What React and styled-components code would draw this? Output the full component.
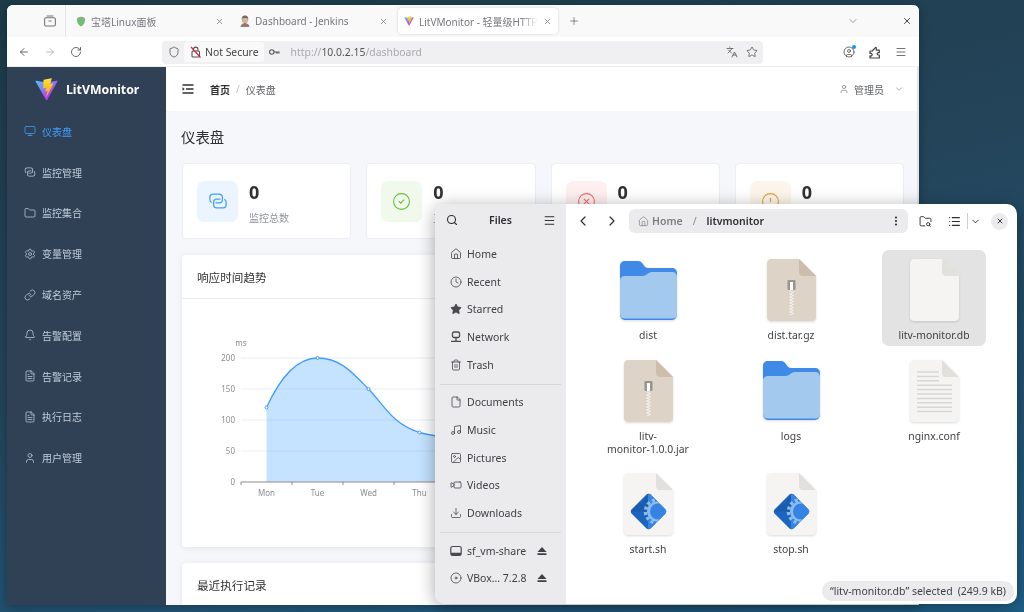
import React from "react";
import styled, { createGlobalStyle } from "styled-components";
import {
  ArrowLeft, ArrowRight, Bell, ChevronDown, ChevronLeft, ChevronRight, CircleAlert, CircleCheck, CircleX,
  Clock, Disc, Download, EllipsisVertical, File, FileText, Folder, FolderSearch, HardDrive, Home, Image,
  Languages, Link as LinkIcon, List, Menu, Monitor, Music, Plus, RotateCw, Search,
  Settings, Shield, Star, Trash2, User, Video, X, CircleUser,
} from "lucide-react";

const GlobalStyle = createGlobalStyle`
  html, body { margin: 0; padding: 0; width: 1024px; height: 612px; overflow: hidden; }
  body { font-family: "Noto Sans", "Noto Sans CJK SC", sans-serif; }
  * { box-sizing: border-box; }
`;

const Desktop = styled.div`
  position: relative;
  width: 1024px;
  height: 612px;
  overflow: hidden;
  background: linear-gradient(165deg, #1d3a48 0%, #24445a 45%, #1f6088 100%);
  filter: blur(0.3px);
`;

/* browser window */
const BrowserWindow = styled.div`
  position: absolute;
  left: 7px;
  top: 5px;
  width: 912px;
  height: 600px;
  display: flex;
  flex-direction: column;
  overflow: hidden;
  background: #fff;
  border-radius: 6px 6px 0 0;
  box-shadow: 0 2px 10px rgba(0, 0, 0, 0.3);
`;

const TabBar = styled.div`
  height: 32px;
  flex: none;
  display: flex;
  align-items: center;
  background: #f9f9fa;
  color: #5b5b66;
`;

const TabsButton = styled.div`
  width: 59px;
  height: 100%;
  display: flex;
  align-items: center;
  justify-content: flex-end;
  padding-right: 9px;
  margin-right: 4px;
  border-right: 1px solid #e4e4e6;
  color: #777;
`;

const Tabs = styled.div`
  display: flex;
  gap: 4px;
  height: 26px;
`;

const Tab = styled.div`
  width: 160px;
  height: 26px;
  display: flex;
  align-items: center;
  gap: 5px;
  padding: 0 6px;
  font-size: 10px;
  color: #77777f;
  border-radius: 4px;
  background: ${p => (p.$active ? "#fff" : "transparent")};
  box-shadow: ${p => (p.$active ? "0 0 3px rgba(0,0,0,.16)" : "none")};
`;

const TabTitle = styled.span`
  flex: 1;
  white-space: nowrap;
  overflow: hidden;
  ${p => p.$fade && "mask-image: linear-gradient(to right, #000 85%, transparent);"}
`;

const TabBarEnd = styled.div`
  flex: 1;
  display: flex;
  align-items: center;
  padding: 0 7px 0 10px;
  justify-content: space-between;
`;

const WindowButtons = styled.div`
  display: flex;
  align-items: center;
  gap: 43px;
`;

const Toolbar = styled.div`
  height: 29px;
  flex: none;
  display: flex;
  align-items: center;
  padding: 1px 0 0 11px;
  background: #fff;
  color: #444;
`;

const NavButtons = styled.div`
  width: 144px;
  display: flex;
  gap: 14px;
  flex: none;
`;

const UrlBar = styled.div`
  width: 601px;
  height: 23px;
  flex: none;
  display: flex;
  align-items: center;
  padding: 0 4px 0 6px;
  background: #f0f0f2;
  border-radius: 4px;
  font-size: 10.4px;
`;

const NotSecure = styled.div`
  display: flex;
  align-items: center;
  gap: 4px;
  height: 20px;
  padding: 0 5px 0 6px;
  margin: 0 5px 0 4px;
  border-radius: 3px;
  background: #f9f9fa;
  color: #444;
`;

const UrlText = styled.span`
  flex: 1;
  margin-left: 11px;
  color: #a8a8ae;
  b { font-weight: 400; color: #555; }
`;

const UrlActions = styled.div`
  display: flex;
  gap: 8px;
  color: #444;
  padding-right: 1px;
`;

const ToolbarEnd = styled.div`
  display: flex;
  gap: 14px;
  margin-left: 80px;
`;

const ProfileBadge = styled.span`
  position: relative;
  display: flex;
  &::after {
    content: "";
    position: absolute;
    right: -1px;
    top: -1px;
    width: 4px;
    height: 4px;
    border-radius: 50%;
    background: #0a9cf0;
  }
`;

const Strip = styled.div`
  height: 1px;
  flex: none;
  background: #eeeef0;
`;

const PageBody = styled.div`
  flex: 1;
  min-height: 0;
  display: flex;
`;

const Sidebar = styled.aside`
  width: 159px;
  flex: none;
  background: #304156;
`;

const Brand = styled.div`
  height: 44px;
  display: flex;
  align-items: center;
  gap: 8px;
  padding-left: 28px;
  color: #fff;
  font-size: 12.3px;
  font-weight: 700;
`;

const NavItem = styled.div`
  height: 40.8px;
  display: flex;
  align-items: center;
  gap: 6px;
  padding-left: 17px;
  font-size: 10px;
  color: ${p => (p.$active ? "#409eff" : "#bfcbd9")};
`;

const Main = styled.main`
  flex: 1;
  min-width: 0;
  display: flex;
  flex-direction: column;
  background: #f5f7fa;
  border-right: 2px solid #e3e4e6;
`;

const PageHeader = styled.header`
  height: 44px;
  flex: none;
  display: flex;
  align-items: center;
  padding: 0 13px 0 16px;
  background: #fff;
  font-size: 10px;
  color: #303133;
`;

const Crumbs = styled.div`
  flex: 1;
  display: flex;
  align-items: center;
  margin-left: 16px;
  b { font-weight: 700; }
  i { font-style: normal; margin: 0 6px; color: #c0c4cc; }
  span { color: #606266; }
`;

const UserMenu = styled.div`
  display: flex;
  align-items: center;
  gap: 5px;
  color: #606266;
`;

const Content = styled.div`
  padding: 17px 13px 0 16px;
  overflow: hidden;
  flex: 1;
`;

const PageTitle = styled.h1`
  margin: 0 0 15px -1px;
  font-size: 14.4px;
  line-height: 20px;
  font-weight: 400;
  color: #303133;
`;

const StatGrid = styled.div`
  display: grid;
  grid-template-columns: repeat(4, 1fr);
  gap: 15px;
`;

const StatCard = styled.div`
  height: 76px;
  display: flex;
  align-items: center;
  gap: 11px;
  padding: 0 14px;
  background: #fff;
  border: 1px solid #ebeef5;
  border-radius: 4px;
`;

const StatIcon = styled.div`
  width: 41px;
  height: 41px;
  border-radius: 7px;
  display: flex;
  align-items: center;
  justify-content: center;
  background: ${p => p.$bg};
  color: ${p => p.$fg};
`;

const StatValue = styled.div`
  padding-top: 2px;
  font-size: 18px;
  line-height: 24px;
  font-weight: 700;
  color: #303133;
`;

const StatLabel = styled.div`
  margin-top: 7px;
  font-size: 10px;
  line-height: 14px;
  min-height: 14px;
  color: #909399;
`;

const Panel = styled.section`
  margin-top: 16px;
  background: #fff;
  border-radius: 4px;
  box-shadow: 0 1px 6px rgba(0, 0, 0, 0.08);
`;

const PanelHead = styled.div`
  height: 44px;
  display: flex;
  align-items: center;
  padding: 0 15px;
  font-size: 11.6px;
  color: #303133;
  border-bottom: ${p => (p.$flat ? "none" : "1px solid #ebeef5")};
`;

const Chart = styled.svg`
  display: block;
  text {
    font-family: "Noto Sans", sans-serif;
    font-size: 8px;
    fill: #8a8d93;
  }
`;

/* files window */
const FilesWindow = styled.div`
  position: absolute;
  left: 435px;
  top: 204px;
  width: 582px;
  height: 400px;
  display: flex;
  overflow: hidden;
  border-radius: 10px;
  background: #fff;
  box-shadow: 0 3px 18px rgba(0, 0, 0, 0.35);
`;

const FilesSide = styled.div`
  width: 131px;
  flex: none;
  padding: 0 4px;
  background: #ebebed;
  color: #3f3f44;
  font-size: 10.5px;
`;

const FilesSideHead = styled.div`
  height: 32px;
  margin-bottom: 4px;
  display: flex;
  align-items: center;
  justify-content: space-between;
  padding: 0 6px 0 7px;
  color: #2e2e33;
  font-weight: 600;
`;

const Place = styled.div`
  height: 27.7px;
  display: flex;
  align-items: center;
  gap: 5px;
  padding: 0 15px 0 11px;
  svg:first-child { flex: none; }
`;

const PlaceName = styled.span`
  flex: 1;
  white-space: nowrap;
`;

const PlaceRule = styled.div`
  height: 1px;
  margin: 5.5px 1px 3.5px;
  background: #d6d6d9;
`;

const FilesMain = styled.div`
  flex: 1;
  min-width: 0;
  position: relative;
  color: #333;
`;

const FilesBar = styled.div`
  height: 34px;
  display: flex;
  align-items: center;
  padding: 0 0 0 9px;
  color: #2e2e33;
`;

const NavGroup = styled.div`
  display: flex;
  gap: 13px;
  margin-right: 9px;
`;

const PathBar = styled.div`
  width: 279px;
  height: 24px;
  display: flex;
  align-items: center;
  padding: 0 6px 0 9px;
  border-radius: 6px;
  background: #ebebed;
  font-size: 10.5px;
  font-weight: 600;
  color: #2e2e33;
`;

const PathHome = styled.span`
  display: flex;
  align-items: center;
  gap: 3px;
  color: #7e7e82;
`;

const PathSep = styled.span`
  margin: 0 10px;
  color: #8c8c90;
  font-weight: 400;
`;

const PathSpacer = styled.span`
  flex: 1;
`;

const BarTools = styled.div`
  display: flex;
  align-items: center;
  margin-left: 11px;
`;

const ViewRule = styled.span`
  width: 1px;
  height: 16px;
  margin: 0 2px 0 6px;
  background: #cfcfd2;
`;

const CloseButton = styled.span`
  width: 17px;
  height: 17px;
  margin-left: 10px;
  display: flex;
  align-items: center;
  justify-content: center;
  border-radius: 50%;
  background: #ebebed;
`;

const FileGrid = styled.div`
  display: grid;
  grid-template-columns: repeat(3, 104px);
  column-gap: 39px;
  row-gap: 4.5px;
  padding: 12px 0 0 30px;
  align-items: start;
`;

const FileCell = styled.div`
  display: flex;
  flex-direction: column;
  align-items: center;
  padding: 9px 4px 4px;
  border-radius: 7px;
  background: ${p => (p.$selected ? "#e3e3e3" : "transparent")};
`;

const FileIconBox = styled.div`
  height: 62px;
  display: flex;
  align-items: center;
  justify-content: center;
  margin-bottom: 8px;
  filter: drop-shadow(0 1px 1px rgba(0, 0, 0, 0.14));
`;

const FileName = styled.div`
  font-size: 10.4px;
  line-height: 13px;
  text-align: center;
  color: #3f3f44;
`;

const StatusPill = styled.div`
  position: absolute;
  right: 3px;
  bottom: 3px;
  height: 20px;
  padding: 0 8px;
  display: flex;
  align-items: center;
  gap: 5px;
  font-size: 10.5px;
  color: #3f3f44;
  background: #ebebed;
  border-radius: 10px 10px 8px 10px;
`;

const Logo = ({ size }) => (
  <svg width={size} height={size} viewBox="0 0 410 404" fill="none">
    <defs>
      <linearGradient id="vitePaint" x1="6" y1="33" x2="235" y2="344" gradientUnits="userSpaceOnUse">
        <stop stopColor="#41D1FF" />
        <stop offset="1" stopColor="#BD34FE" />
      </linearGradient>
      <linearGradient id="boltPaint" x1="194" y1="8" x2="236" y2="293" gradientUnits="userSpaceOnUse">
        <stop stopColor="#FFEA83" />
        <stop offset="0.08" stopColor="#FFDD35" />
        <stop offset="1" stopColor="#FFA800" />
      </linearGradient>
    </defs>
    <path d="M399.641 59.5246L215.643 388.545C211.844 395.338 202.084 395.378 198.228 388.618L10.5817 59.5563C6.38087 52.1896 12.6802 43.2665 21.0281 44.7586L205.223 77.6824C206.398 77.8924 207.601 77.8904 208.776 77.6763L389.119 44.8058C397.439 43.2894 403.768 52.1434 399.641 59.5246Z" fill="url(#vitePaint)" />
    <path d="M292.965 1.5744L156.801 28.2552C154.563 28.6937 152.906 30.5903 152.771 32.8664L144.395 174.33C144.198 177.662 147.258 180.248 150.51 179.498L188.42 170.749C191.967 169.931 195.172 173.055 194.443 176.622L183.18 231.775C182.422 235.487 185.907 238.661 189.532 237.56L212.947 230.446C216.577 229.344 220.065 232.527 219.297 236.242L201.398 322.875C200.278 328.294 207.486 331.249 210.492 326.603L212.5 323.5L323.454 102.072C325.312 98.3645 322.108 94.137 318.036 94.9228L279.014 102.454C275.347 103.161 272.227 99.746 273.262 96.1583L298.731 7.86689C299.767 4.27314 296.636 0.855181 292.965 1.5744Z" fill="url(#boltPaint)" />
  </svg>
);

const AcornIcon = () => (
  <svg width="10" height="11" viewBox="0 0 10 11">
    <path d="M1 3h8c.3 3.5-1.5 6.3-4 7.5C2.5 9.3.7 6.5 1 3z" fill="#6cbf73" />
    <path d="M.7 3.2C1.2 1.5 3 .8 5 .8s3.800.7 4.300 2.400z" fill="#8fae86" />
  </svg>
);

const JenkinsIcon = () => (
  <svg width="10" height="12" viewBox="0 0 10 12">
    <ellipse cx="5" cy="4.5" rx="3.3" ry="4" fill="#d9b497" />
    <path d="M1.700 4C1.800 1.500 3.500.5 5 .5S8.200 1.500 8.300 4C7 2.800 3 2.800 1.700 4z" fill="#6d6b6d" />
    <path d="M.6 12c0-2.600 1.800-3.800 4.400-3.800S9.400 9.400 9.400 12z" fill="#8a8078" />
    <path d="M4 8.300h2l-.5 3h-1z" fill="#c75b4f" />
  </svg>
);

const TabsIcon = () => (
  <svg width="12" height="12" viewBox="0 0 12 12" fill="none" stroke="currentColor" strokeWidth="1.1">
    <rect x="0.6" y="2.800" width="10.800" height="8.200" rx="1.500" />
    <path d="M2.500 1h7M4.500 6h3" />
  </svg>
);

const FoldIcon = () => (
  <svg width="12" height="12" viewBox="0 0 12 12" fill="none" stroke="#303133" strokeWidth="1.3">
    <path d="M.5 2h11M4 6h7.500M.5 10h11" />
    <path d="M.5 4.300L2.800 6 .5 7.700z" fill="#303133" stroke="none" />
  </svg>
);

const KeyIcon = () => (
  <svg width="11" height="8" viewBox="0 0 11 8" fill="none" stroke="#555" strokeWidth="1.1">
    <circle cx="2.800" cy="4" r="2.200" />
    <path d="M5 4h5.500M8 4v2M10 4v1.500" />
  </svg>
);

const InsecureLockIcon = () => (
  <svg width="11" height="12" viewBox="0 0 11 12" fill="none" stroke="#555" strokeWidth="1.1">
    <rect x="2" y="5" width="7.500" height="6" rx="1" />
    <path d="M3.500 5V3.300a2.200 2.200 0 0 1 4.400 0V5" />
    <path d="M1 1l9.500 10.500" stroke="#d7264b" strokeWidth="1.2" />
  </svg>
);

const ExtensionIcon = () => (
  <svg width="12" height="13" viewBox="0 0 12 13" fill="none" stroke="#444" strokeWidth="1.2" strokeLinejoin="round">
    <path d="M1 5h2.300l3-3.300c.4-.5 1-.3 1 .3v2.200h3v2.400H9.300a1.200 1.200 0 0 0 0 2.400h1V12H1V9.800a1.200 1.200 0 0 0 1.500-2.400H1z" />
  </svg>
);

const ConnectionIcon = ({ size }) => (
  <svg width={size} height={size} viewBox="0 0 1024 1024" fill="currentColor">
    <path d="M640 384v64H448a128 128 0 0 0-128 128v128a128 128 0 0 0 128 128h320a128 128 0 0 0 128-128V576a128 128 0 0 0-64-110.848V394.880c74.560 26.368 128 97.472 128 181.056v128a192 192 0 0 1-192 192H448a192 192 0 0 1-192-192V576a192 192 0 0 1 192-192z" />
    <path d="M384 640v-64h192a128 128 0 0 0 128-128V320a128 128 0 0 0-128-128H256a128 128 0 0 0-128 128v128a128 128 0 0 0 64 110.848v70.272A192.060 192.060 0 0 1 64 448V320a192 192 0 0 1 192-192h320a192 192 0 0 1 192 192v128a192 192 0 0 1-192 192z" />
  </svg>
);

const EjectIcon = () => (
  <svg width="10" height="10" viewBox="0 0 10 10" fill="#3f3f44">
    <path d="M5 1l4.500 5h-9z" />
    <rect x="0.5" y="7.200" width="9" height="1.800" rx="0.3" />
  </svg>
);

const NetworkIcon = () => (
  <svg width="12" height="12" viewBox="0 0 12 12" fill="none" stroke="#4a4a4f" strokeWidth="1.3">
    <rect x="2.500" y="1" width="7" height="5.500" rx="1.500" />
    <path d="M6 6.500V10M1 10.300h10" />
  </svg>
);

const DriveIcon = () => (
  <svg width="12" height="12" viewBox="0 0 12 12" fill="none" stroke="#4a4a4f" strokeWidth="1.2">
    <rect x="0.8" y="1.500" width="10.400" height="9" rx="1.800" />
    <path d="M1 7.800h10V9a1.300 1.300 0 0 1-1.300 1.300H2.300A1.300 1.300 0 0 1 1 9z" fill="#4a4a4f" stroke="none" />
  </svg>
);

const FolderArt = () => (
  <svg width="57" height="59" viewBox="0 0 57 59">
    <path d="M5 0h13c3 0 4 2 6 4.500 1 1.500 2 2.500 4 2.500h24c3 0 5 2 5 5v41c0 3-2 6-5 6H5c-3 0-5-3-5-6V5c0-3 2-5 5-5z" fill="#3f8ae6" />
    <path d="M0 19c0-2 2-4 5-4h17c3 0 4-1 6-2.500 1.500-1 2.500-1.500 4.500-1.500H52c3 0 5 2 5 5v37c0 3-2 4.500-5 4.500H5c-3 0-5-1.500-5-4.500z" fill="#a4c9ef" />
  </svg>
);

const PageShape = "M4 0h28l17 17v41c0 2.500-2 4-4 4H4c-2 0-4-1.500-4-4V4c0-2 2-4 4-4z";
const FoldShape = "M32 0l17 17H36c-2.500 0-4-1.500-4-4z";

const ArchiveArt = () => (
  <svg width="49" height="62" viewBox="0 0 49 62">
    <path d={PageShape} fill="#ded3c7" />
    <path d={FoldShape} fill="#cdbdac" />
    <rect x="20.500" y="21" width="8" height="10" rx="1" fill="#98948f" />
    <rect x="23" y="23" width="3" height="8" fill="#fff" />
    <path d="M22.500 32l4 1.500-4 1.500 4 1.500-4 1.500 4 1.500-4 1.500 4 1.500-4 1.500 4 1.500-4 1.500 4 1.500-4 1.500 4 1.500-4 1.500 4 1.500-4 1.500" fill="none" stroke="#f4f2ef" strokeWidth="1" />
  </svg>
);

const BlankArt = () => (
  <svg width="49" height="62" viewBox="0 0 49 62">
    <path d={PageShape} fill="#f5f4f2" />
    <path d={FoldShape} fill="#e2e0dc" />
  </svg>
);

const TextArt = () => (
  <svg width="49" height="62" viewBox="0 0 49 62">
    <path d={PageShape} fill="#f5f4f2" />
    <path d={FoldShape} fill="#e2e0dc" />
    <path d="M7 12h22M7 16.400h22M7 20.800h22M7 25.200h35M7 29.600h35M7 34h35M7 38.400h35M7 42.800h35M7 47.200h35M7 51.600h35" stroke="#d6d6d4" strokeWidth="1.5" />
  </svg>
);

const diamond = "M22.500 21.500c1-1 3-1 4 0l15 15c1 1 1 3 0 4l-15 15c-1 1-3 1-4 0l-15-15c-1-1-1-3 0-4z";

const ScriptArt = () => (
  <svg width="49" height="62" viewBox="0 0 49 62">
    <defs>
      <clipPath id="diamondClip"><path d={diamond} /></clipPath>
    </defs>
    <path d={PageShape} fill="#f5f4f2" />
    <path d={FoldShape} fill="#e2e0dc" />
    <path d={diamond} fill="#1c64bd" />
    <g clipPath="url(#diamondClip)">
      <path d="M24 20h18v38H24z" fill="#3584e4" />
      <path d="M7 38.500l8-8h3l6-10v18z" fill="#1a5cad" />
      <circle cx="33" cy="38.500" r="11.500" fill="none" stroke="#8cbcee" strokeWidth="3.5" strokeDasharray="3 2.400" />
      <circle cx="33" cy="38.500" r="10" fill="#8cbcee" />
      <circle cx="34" cy="38.500" r="8" fill="#3584e4" />
    </g>
  </svg>
);

const days = ["Mon", "Tue", "Wed", "Thu"];
const bandX = i => 266.5 + i * 51;
const points = [[0, 407.5], [1, 358], [2, 389], [3, 432.5]];
const linePath = "M266.500 407.500C280 378 296 358 317.500 358C340 358 352 372 368.500 389C385 406 392 424 419.500 432.500C432 436 445 437 470 440";
const ticks = [[200, 358], [150, 389], [100, 420], [50, 451], [0, 482]];

const places = [
  { name: "Home", icon: <Home size={12} strokeWidth={1.6} /> },
  { name: "Recent", icon: <Clock size={12} strokeWidth={1.5} /> },
  { name: "Starred", icon: <Star size={12} strokeWidth={1.5} fill="#4a4a4f" /> },
  { name: "Network", icon: <NetworkIcon /> },
  { name: "Trash", icon: <Trash2 size={12} strokeWidth={1.5} /> },
];

const folders = [
  { name: "Documents", icon: <File size={12} strokeWidth={1.5} /> },
  { name: "Music", icon: <Music size={12} strokeWidth={1.5} /> },
  { name: "Pictures", icon: <Image size={12} strokeWidth={1.5} /> },
  { name: "Videos", icon: <Video size={12} strokeWidth={1.5} style={{ transform: "scaleX(-1)" }} /> },
  { name: "Downloads", icon: <Download size={12} strokeWidth={1.5} /> },
];

const files = [
  { name: "dist", art: <FolderArt /> },
  { name: "dist.tar.gz", art: <ArchiveArt /> },
  { name: "litv-monitor.db", art: <BlankArt />, selected: true },
  { name: <>litv-<br />monitor-1.0.0.jar</>, art: <ArchiveArt /> },
  { name: "logs", art: <FolderArt /> },
  { name: "nginx.conf", art: <TextArt /> },
  { name: "start.sh", art: <ScriptArt /> },
  { name: "stop.sh", art: <ScriptArt /> },
];

const navItems = [
  { label: "仪表盘", icon: <Monitor size={12} strokeWidth={1.5} />, active: true },
  { label: "监控管理", icon: <ConnectionIcon size={12} /> },
  { label: "监控集合", icon: <Folder size={12} strokeWidth={1.5} /> },
  { label: "变量管理", icon: <Settings size={12} strokeWidth={1.5} /> },
  { label: "域名资产", icon: <LinkIcon size={12} strokeWidth={1.5} /> },
  { label: "告警配置", icon: <Bell size={12} strokeWidth={1.5} /> },
  { label: "告警记录", icon: <FileText size={12} strokeWidth={1.5} /> },
  { label: "执行日志", icon: <FileText size={12} strokeWidth={1.5} /> },
  { label: "用户管理", icon: <User size={12} strokeWidth={1.5} /> },
];

const stats = [
  { id: "total", value: 0, label: "监控总数", bg: "#ecf5ff", fg: "#409eff", icon: <ConnectionIcon size={20} /> },
  { id: "up", value: 0, label: "正常运行", bg: "#f0f9eb", fg: "#67c23a", icon: <CircleCheck size={19} strokeWidth={1.4} /> },
  { id: "down", value: 0, label: "", bg: "#fef0f0", fg: "#f56c6c", icon: <CircleX size={19} strokeWidth={1.4} /> },
  { id: "warn", value: 0, label: "", bg: "#fdf6ec", fg: "#e6a23c", icon: <CircleAlert size={19} strokeWidth={1.4} /> },
];

export default function App() {
  return (
    <Desktop>
      <GlobalStyle />
      <BrowserWindow>
        <TabBar>
          <TabsButton><TabsIcon /></TabsButton>
          <Tabs>
            <Tab><AcornIcon /><TabTitle>宝塔Linux面板</TabTitle><X size={9} /></Tab>
            <Tab><JenkinsIcon /><TabTitle>Dashboard - Jenkins</TabTitle><X size={9} /></Tab>
            <Tab $active><Logo size={10} /><TabTitle $fade>LitVMonitor - 轻量级HTTP监控</TabTitle><X size={9} /></Tab>
          </Tabs>
          <TabBarEnd>
            <Plus size={12} strokeWidth={1.4} />
            <WindowButtons>
              <ChevronDown size={12} strokeWidth={1.2} />
              <X size={10} strokeWidth={2.2} color="#333" />
            </WindowButtons>
          </TabBarEnd>
        </TabBar>
        <Toolbar>
          <NavButtons>
            <ArrowLeft size={12} strokeWidth={1.6} />
            <ArrowRight size={12} strokeWidth={1.6} color="#aaa" />
            <RotateCw size={12} strokeWidth={1.6} />
          </NavButtons>
          <UrlBar>
            <Shield size={12} strokeWidth={1.4} color="#444" />
            <NotSecure><InsecureLockIcon />Not Secure</NotSecure>
            <KeyIcon />
            <UrlText>http://<b>10.0.2.15</b>/dashboard</UrlText>
            <UrlActions>
              <Languages size={12} strokeWidth={1.4} />
              <Star size={12} strokeWidth={1.4} />
            </UrlActions>
          </UrlBar>
          <ToolbarEnd>
            <ProfileBadge><CircleUser size={12} strokeWidth={1.5} /></ProfileBadge>
            <ExtensionIcon />
            <Menu size={12} strokeWidth={1.5} />
          </ToolbarEnd>
        </Toolbar>
        <Strip />
        <PageBody>
          <Sidebar>
            <Brand><Logo size={23} />LitVMonitor</Brand>
            {navItems.map(item => (
              <NavItem key={item.label} $active={item.active}>{item.icon}{item.label}</NavItem>
            ))}
          </Sidebar>
          <Main>
            <PageHeader>
              <FoldIcon />
              <Crumbs><b>首页</b><i>/</i><span>仪表盘</span></Crumbs>
              <UserMenu>
                <User size={10} strokeWidth={1.4} />
                <span>管理员</span>
                <ChevronDown size={10} strokeWidth={1.2} style={{ marginLeft: 5 }} />
              </UserMenu>
            </PageHeader>
            <Content>
              <PageTitle>仪表盘</PageTitle>
              <StatGrid>
                {stats.map(s => (
                  <StatCard key={s.id}>
                    <StatIcon $bg={s.bg} $fg={s.fg}>{s.icon}</StatIcon>
                    <div>
                      <StatValue>{s.value}</StatValue>
                      <StatLabel>{s.label}</StatLabel>
                    </div>
                  </StatCard>
                ))}
              </StatGrid>
              <Panel>
                <PanelHead>响应时间趋势</PanelHead>
                <Chart width="722" height="248" viewBox="182 299 722 248">
                  {ticks.slice(0, 4).map(([, y]) => (
                    <line key={y} x1="241" x2="894" y1={y} y2={y} stroke="#e8edf7" />
                  ))}
                  <path d={`${linePath}V482H266.500Z`} fill="rgba(64,158,255,.3)" />
                  <path d={linePath} fill="none" stroke="#409eff" strokeWidth="1.3" />
                  {points.map(([i, y]) => (
                    <circle key={i} cx={bandX(i)} cy={y} r="1.5" fill="#fff" stroke="#409eff" />
                  ))}
                  <line x1="241" x2="894" y1="482" y2="482" stroke="#8c8c8c" />
                  {days.map((d, i) => (
                    <React.Fragment key={d}>
                      <line x1={241 + i * 51} x2={241 + i * 51} y1="482" y2="485" stroke="#8c8c8c" />
                      <text x={bandX(i)} y="496" textAnchor="middle">{d}</text>
                    </React.Fragment>
                  ))}
                  {ticks.map(([v, y]) => (
                    <text key={v} x="235" y={y + 3} textAnchor="end">{v}</text>
                  ))}
                  <text x="241" y="346" textAnchor="middle">ms</text>
                </Chart>
              </Panel>
              <Panel>
                <PanelHead $flat>最近执行记录</PanelHead>
              </Panel>
            </Content>
          </Main>
        </PageBody>
      </BrowserWindow>

      <FilesWindow>
        <FilesSide>
          <FilesSideHead>
            <Search size={12} strokeWidth={2.2} />
            <span>Files</span>
            <Menu size={13} strokeWidth={1.8} />
          </FilesSideHead>
          {places.map(p => (
            <Place key={p.name}>{p.icon}<PlaceName>{p.name}</PlaceName></Place>
          ))}
          <PlaceRule />
          {folders.map(p => (
            <Place key={p.name}>{p.icon}<PlaceName>{p.name}</PlaceName></Place>
          ))}
          <PlaceRule />
          <Place><DriveIcon /><PlaceName>sf_vm-share</PlaceName><EjectIcon /></Place>
          <Place><Disc size={12} strokeWidth={1.5} /><PlaceName>VBox… 7.2.8</PlaceName><EjectIcon /></Place>
        </FilesSide>
        <FilesMain>
          <FilesBar>
            <NavGroup>
              <ChevronLeft size={16} strokeWidth={1.8} />
              <ChevronRight size={16} strokeWidth={1.8} />
            </NavGroup>
            <PathBar>
              <PathHome><Home size={11} strokeWidth={1.5} />Home</PathHome>
              <PathSep>/</PathSep>
              <span>litvmonitor</span>
              <PathSpacer />
              <EllipsisVertical size={12} strokeWidth={2.4} />
            </PathBar>
            <BarTools>
              <FolderSearch size={13} strokeWidth={1.7} style={{ marginRight: 16 }} />
              <List size={13} strokeWidth={2.2} />
              <ViewRule />
              <ChevronDown size={11} strokeWidth={2} />
              <CloseButton><X size={8} strokeWidth={2.8} /></CloseButton>
            </BarTools>
          </FilesBar>
          <FileGrid>
            {files.map((f, i) => (
              <FileCell key={i} $selected={f.selected}>
                <FileIconBox>{f.art}</FileIconBox>
                <FileName>{f.name}</FileName>
              </FileCell>
            ))}
          </FileGrid>
          <StatusPill><span>“litv-monitor.db” selected</span><span>(249.9 kB)</span></StatusPill>
        </FilesMain>
      </FilesWindow>
    </Desktop>
  );
}
